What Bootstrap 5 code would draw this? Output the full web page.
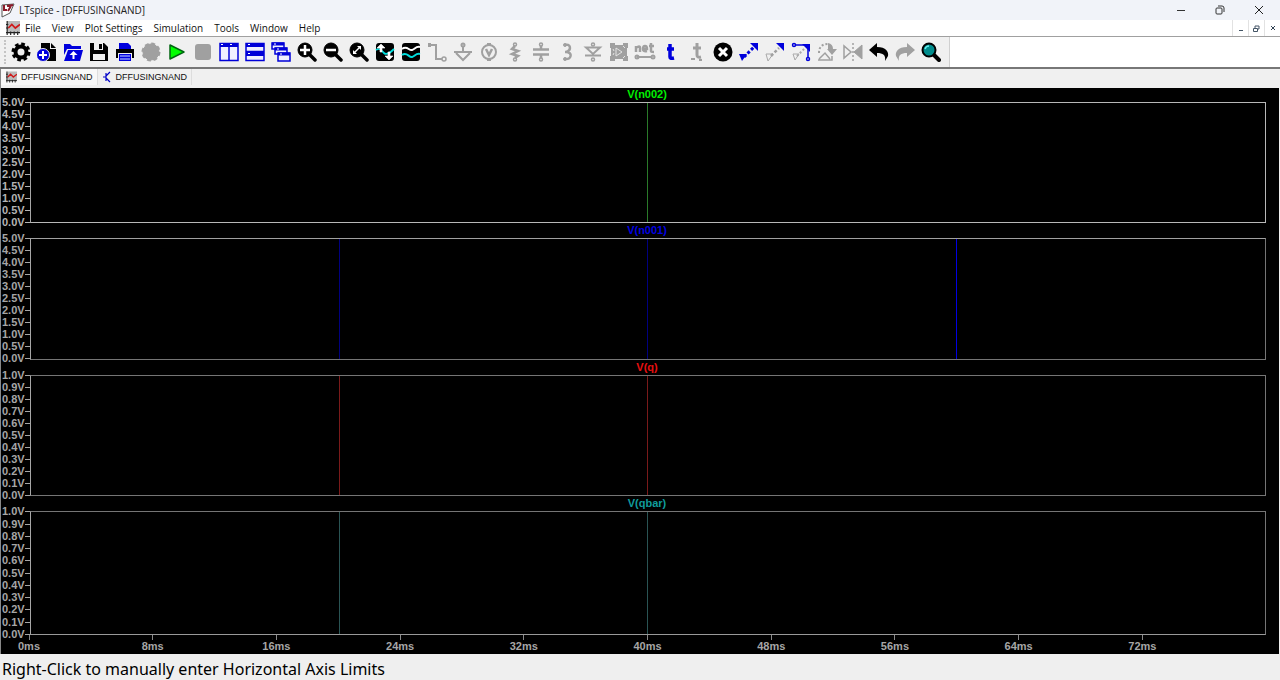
<!DOCTYPE html>
<html lang="en">
<head>
<meta charset="utf-8">
<meta name="viewport" content="width=device-width, initial-scale=1">
<title>LTspice - [DFFUSINGNAND]</title>
<link href="https://cdn.jsdelivr.net/npm/bootstrap@5.3.0/dist/css/bootstrap.min.css" rel="stylesheet">
<style>
  body { font-family: "Open Sans", "Noto Sans", sans-serif; font-size: 10px; line-height: 16px; color: #111; background: #efefef; }
  button { border: 0; background: transparent; padding: 0; color: inherit; }
  svg { display: block; }
  .titlebar { height: 20px; background: #f1f3f9; color: #222; padding-right: 2px; }
  .win-btn { width: 39px; height: 20px; }
  .menubar { height: 17px; background: #fff; border-bottom: 1px solid #a0a0a0; padding-left: 6px; }
  .menu-items { gap: 11px; margin-left: 5px; }
  .menubar a { color: #111; text-decoration: none; }
  .mdi-btn { width: 16px; height: 16px; border-left: 1px solid #e2e2e2; }
  .toolrow { height: 32px; background: #fff; border-bottom: 2px solid #777; }
  .tools { background: #f0f0f0; padding: 0 5px 0 8px; border-right: 1px solid #d0d0d0; }
  .tools::before { content: ""; width: 0; height: 24px; margin: 0 2px 0 -4px; border-left: 2px dotted #c4c4c4; }
  .tools button { width: 26px; height: 30px; }
  .tools svg { margin: auto; }
  .off { color: #a0a0a0; }
  .doctabs { height: 19px; background: #f0f0f0; font: 9px/16px "Liberation Sans", sans-serif; border-left: 1px solid #888; }
  .doctabs button { height: 16px; padding: 0 4px 0 5px; border-right: 1px solid #ddd; }
  .doctabs .current { background: #f8f8f8; }
  .plots { background: #000; color: #a6a6a6; font: bold 11px/14px "Liberation Sans", sans-serif; border-left: 1px solid #888; margin-right: 1px; padding-right: 13px; }
  .pane { flex: 137 1 0; --frame: #757575; }
  .pane.active { flex-grow: 135; --frame: #b8b8b8; color: #b4b4b4; }
  .pane.tall { flex-grow: 139; --base: #999; }
  .pane-title { height: 15px; margin-left: 27px; line-height: 14px; }
  .pane.active .pane-title { height: 14px; line-height: 13px; }
  .scale { width: 29px; padding-left: 1px; }
  .scale div { height: 1px; line-height: 1px; }
  .scale div::after { content: ""; width: 5px; height: 1px; margin-left: auto; background: currentColor; }
  .frame { border: 1px solid var(--frame); border-left-color: #a6a6a6; border-bottom-color: var(--base, var(--frame)); }
  .edge { top: 0; bottom: 0; width: 1px; margin-left: -1px; background: currentColor; }
  .at-20 { left: 25%; } .at-40 { left: 50%; } .at-60 { left: 75%; }
  .timeaxis { height: 19px; margin-left: 28px; }
  .timeaxis > div { margin: 0 -5%; }
  .timeaxis span { flex: 1 1 0; text-align: center; line-height: 13px; }
  .timeaxis span::before { content: ""; display: block; width: 1px; height: 5px; margin: 0 auto; background: #888; }
  .timeaxis span:last-child { visibility: hidden; }
  .statusbar { height: 26px; font-family: "Noto Sans", sans-serif; font-size: 16px; line-height: 30px; padding-left: 2px; color: #000; }
</style>
</head>
<body>
<div class="d-flex flex-column vh-100 overflow-hidden">
  <header class="titlebar d-flex align-items-center flex-shrink-0">
    <svg width="15" height="16" viewBox="0 0 15 16" fill="none"><path d="M2 3 14 2 10 11 2 15Z" fill="#fff" stroke="#555"/><path d="M4 3v5h3M7 4l6-1M11 4 8 9" stroke="#8b1a2b" stroke-width="2"/></svg>
    <span class="ms-1">LTspice - [DFFUSINGNAND]</span>
    <div class="ms-auto d-flex">
      <button class="win-btn" aria-label="Minimize"><svg class="mx-auto" width="10" height="10" stroke="#333"><path d="M1 5.500h8"/></svg></button>
      <button class="win-btn" aria-label="Restore"><svg class="mx-auto" width="10" height="10" fill="none" stroke="#333"><rect x="1" y="3" width="6" height="6" rx="1"/><path d="M3 1h4q2 0 2 2v4"/></svg></button>
      <button class="win-btn" aria-label="Close"><svg class="mx-auto" width="10" height="10" stroke="#222"><path d="M1 1l8 8M9 1 1 9"/></svg></button>
    </div>
  </header>

  <nav class="menubar d-flex align-items-center flex-shrink-0" aria-label="Menu">
    <svg width="14" height="14" viewBox="0 0 12 12" fill="none"><path d="M1 0h11v10H1z" fill="#bbb"/><path d="M1 0v12M0 10h12M0 3h2M0 6h2M4 9v3M7 9v3M10 9v3" stroke="#222"/><path d="M2 6 5 3l3 3 4-3" stroke="#d01818" stroke-width="1.500"/></svg>
    <div class="menu-items d-flex">
      <a href="#">File</a><a href="#">View</a><a href="#">Plot Settings</a><a href="#">Simulation</a><a href="#">Tools</a><a href="#">Window</a><a href="#">Help</a>
    </div>
    <div class="ms-auto d-flex">
      <button class="mdi-btn" aria-label="Minimize document"><svg class="mx-auto" width="6" height="8" stroke="#456"><path d="M1 6.500h4"/></svg></button>
      <button class="mdi-btn" aria-label="Restore document"><svg class="mx-auto" width="7" height="7" fill="none" stroke="#456"><path d="M.5 3.500h4v3h-4zM2 3V1h4v3H5"/></svg></button>
      <button class="mdi-btn" aria-label="Close document"><svg class="mx-auto" width="6" height="6" stroke="#345"><path d="M1 1l4 4M5 1 1 5"/></svg></button>
    </div>
  </nav>

  <div class="toolrow d-flex flex-shrink-0">
    <div class="tools d-flex align-items-center" role="toolbar" aria-label="Tools">
      <button aria-label="Settings"><svg width="20" height="20" fill="none" stroke="#000"><circle cx="10" cy="10" r="5.500" stroke-width="4"/><circle cx="10" cy="10" r="8" stroke-width="3" stroke-dasharray="3.600 2.680"/></svg></button>
      <button aria-label="New"><svg width="20" height="20"><path d="M4 1h9v6h6v12H4z"/><path d="M14 1l5 5h-5z"/><circle cx="6" cy="13" r="6.500" fill="#00d" stroke="#f0f0f0"/><path d="M6 9v8M2 13h8" stroke="#fff" stroke-width="2"/></svg></button>
      <button aria-label="Open"><svg width="20" height="20" fill="#0000dc"><path d="M1 2h6l2 2h9v3H4L1 13z"/><path d="M5 8h15l-3 11H1z"/><path d="M10.500 9l4 4h-3v4h-2v-4h-3z" fill="#fff"/></svg></button>
      <button aria-label="Save"><svg width="20" height="20"><path d="M1 1h14l4 4v14H1z"/><path d="M5 1h9v7H5z" fill="#f0f0f0"/><path d="M10 2h3v5h-3z"/><path d="M4 12h12v6H4z" fill="#f0f0f0"/></svg></button>
      <button aria-label="Print"><svg width="20" height="20"><path d="M4 1h9l3 3v4H4z" fill="#00d"/><path d="M1 7h18v9H1z"/><path d="M3 11h14v9H3z" fill="#f0f0f0"/><path d="M4 12h12v7H4z" fill="#00d"/><path d="M5 14h10M5 17h10" stroke="#cdf"/></svg></button>
      <button aria-label="Halt" class="off"><svg width="20" height="20" fill="currentColor" stroke="currentColor"><circle cx="10" cy="10" r="8"/><circle cx="10" cy="10" r="8.500" fill="none" stroke-width="2" stroke-dasharray="4 2.675"/></svg></button>
      <button aria-label="Run"><svg width="20" height="20" fill="#0f0" stroke="#061" stroke-width="1.500" stroke-linejoin="round"><path d="M3 3v14l14-7z"/></svg></button>
      <button aria-label="Stop" class="off"><svg width="20" height="20"><rect x="2" y="2" width="16" height="16" rx="3" fill="currentColor"/></svg></button>
      <button aria-label="Tile vertically"><svg width="20" height="20" fill="#f0f0ff" stroke="#0000d8"><path d="M1 1.500h9v17H1zM10 1.500h9v17h-9z" stroke-width="1.500"/><path d="M1 3h18" stroke-width="4"/><path d="M2 2.500h2M11 2.500h2" stroke="#fff"/></svg></button>
      <button aria-label="Tile horizontally"><svg width="20" height="20" fill="#f0f0ff" stroke="#0000d8"><path d="M1 1.500h18v8H1zM1 10.500h18v8H1z" stroke-width="1.500"/><path d="M1 3h18M1 12h18" stroke-width="4"/><path d="M3 2.500h2M3 11.500h2" stroke="#fff"/></svg></button>
      <button aria-label="Cascade"><svg width="20" height="20" fill="#f0f0ff" stroke="#0000d8" stroke-width="1.500"><path d="M1 1h12v6H1zM4 6h12v6H4zM7 11h12v8H7z"/><path d="M1 2h12M4 7h12M7 12h12" stroke-width="3"/><path d="M3 2h2M6 7h2M9 12h2" stroke="#fff" stroke-width="1"/></svg></button>
      <button aria-label="Zoom in"><svg width="20" height="20" stroke="#000" fill="none"><circle cx="8" cy="8" r="7" fill="#000"/><path d="M12 12l6 6" stroke-width="3.500" stroke-linecap="round"/><path d="M8 3v10M3 8h10" stroke="#fff" stroke-width="2.500"/></svg></button>
      <button aria-label="Zoom out"><svg width="20" height="20" stroke="#000" fill="none"><circle cx="8" cy="8" r="7" fill="#000"/><path d="M12 12l6 6" stroke-width="3.500" stroke-linecap="round"/><path d="M3 8h10" stroke="#fff" stroke-width="2.500"/></svg></button>
      <button aria-label="Zoom to fit"><svg width="20" height="20" stroke="#000" fill="none"><circle cx="8" cy="8" r="7" fill="#000"/><path d="M12 12l6 6" stroke-width="3.500" stroke-linecap="round"/><path d="M5 11l6-6" stroke="#fff" stroke-width="1.500"/><path d="M8 4h4v4zM4 8v4h4z" fill="#fff" stroke="none"/></svg></button>
      <button aria-label="Autorange"><svg width="20" height="20" fill="none"><rect x="1" y="1" width="18" height="18" rx="3" fill="#000"/><path d="M1 8c4-3 6 1 8 3s6 0 10-4" stroke="#0dd" stroke-width="1.800"/><path d="M6 2l4 4H7v4H5V6H2zM14 18l4-4h-3v-4h-2v4h-3z" fill="#fff" stroke="#fff" stroke-width=".6"/></svg></button>
      <button aria-label="Add trace"><svg width="20" height="20" fill="none"><rect x="1" y="1" width="18" height="18" rx="3" fill="#000"/><path d="M1 7c5-4 7 2 10 1s4-4 8-3" stroke="#fff" stroke-width="2"/><path d="M1 13c5-4 7 3 10 2s4-4 8-3" stroke="#0dd" stroke-width="2"/></svg></button>
      <button aria-label="Wire" class="off"><svg width="20" height="20" fill="none" stroke="currentColor" stroke-width="2"><path d="M2 3h7v14h6"/><path d="M1 1h3v4H1z" fill="currentColor" stroke="none"/><circle cx="17" cy="17" r="2" stroke-width="1.500"/></svg></button>
      <button aria-label="Ground" class="off"><svg width="20" height="20" fill="none" stroke="currentColor" stroke-width="2"><circle cx="10" cy="3" r="1.500"/><path d="M10 5v5M1 10h18M3 11l7 7 7-7"/></svg></button>
      <button aria-label="Voltage source" class="off"><svg width="20" height="20" fill="none" stroke="currentColor" stroke-width="2"><circle cx="10" cy="10" r="7"/><path d="M7 7l3 6 3-6" stroke-width="2.500"/><path d="M8 1h4v3H8zM8 16h4v3H8z" fill="currentColor" stroke="none"/></svg></button>
      <button aria-label="Resistor" class="off"><svg width="20" height="20" fill="none" stroke="currentColor" stroke-width="2.500"><circle cx="10" cy="2.500" r="1.500" stroke-width="1.500"/><path d="M10 4 7 7l6 2-6 3 6 2-3 2"/><circle cx="10" cy="17.500" r="1.500" stroke-width="1.500"/></svg></button>
      <button aria-label="Capacitor" class="off"><svg width="20" height="20" fill="none" stroke="currentColor" stroke-width="2"><circle cx="10" cy="2.500" r="1.500" stroke-width="1.500"/><circle cx="10" cy="17.500" r="1.500" stroke-width="1.500"/><path d="M10 4v3M10 13v3M2 7.500h16M2 12.500h16" stroke-width="2.500"/></svg></button>
      <button aria-label="Inductor" class="off"><svg width="20" height="20" fill="none" stroke="currentColor" stroke-width="2.500"><path d="M7 3c7-2 8 5 2 7 7 0 6 8-2 7M8 10h3"/><circle cx="8" cy="3" r="1.500" stroke-width="1"/><circle cx="8" cy="17" r="1.500" stroke-width="1"/></svg></button>
      <button aria-label="Diode" class="off"><svg width="20" height="20" fill="none" stroke="currentColor" stroke-width="2"><circle cx="10" cy="2.500" r="1.500" stroke-width="1.500"/><circle cx="10" cy="17.500" r="1.500" stroke-width="1.500"/><path d="M3 5.500h14L10 12zM2 13.500h16"/></svg></button>
      <button aria-label="Component" class="off"><svg width="20" height="20" fill="currentColor"><path d="M1 1h5v2h8V1h5v5h-1v8h1v5h-5v-2H6v2H1v-5h1V6H1z"/><path d="M7 6v8l6-4zM14 4l2 2M14 16l2-2M4 7l1 2M4 13l1-2" fill="none" stroke="#e4e4e4"/></svg></button>
      <button aria-label="Net name" class="off"><svg width="22" height="20" fill="none" stroke="currentColor" stroke-width="2.500"><path d="M2 10V4M2 6q4-3 4 0v4M9 7h4q0-3-2-3t-2 3q0 3 4 2M17 1v8q0 1 3 1M15 4h5"/><path d="M3 15h15" stroke-width="2"/><circle cx="3" cy="15" r="1.500" stroke-width="2"/><circle cx="19" cy="15" r="1.500" stroke-width="2"/></svg></button>
      <button aria-label="Text"><svg width="20" height="20" fill="none" stroke="#0000dc" stroke-width="3.500"><path d="M9 2v13q0 2 4 1M6 7h7"/></svg></button>
      <button aria-label="SPICE directive" class="off"><svg width="20" height="20" fill="none" stroke="currentColor" stroke-width="3"><path d="M10 1v12q0 3 4 2M6 6h8"/><path d="M4 17h4M12 18h3" stroke-width="2"/></svg></button>
      <button aria-label="Delete"><svg width="20" height="20"><circle cx="10" cy="10" r="9.500"/><path d="M6 6l8 8M14 6l-8 8" stroke="#fff" stroke-width="3"/></svg></button>
      <button aria-label="Duplicate"><svg width="20" height="20" fill="#0000dc"><path d="M11 1h8v8z"/><path d="M0 12h8l-5 7z"/><path d="M5 15 15 5" stroke="#0000dc" stroke-width="3" stroke-dasharray="3 2"/></svg></button>
      <button aria-label="Move"><svg width="20" height="20"><path d="M11 1h8v8z" fill="#0000dc"/><path d="M1 12h7l-5 7z" fill="none" stroke="#aaa"/><path d="M6 14 14 6" stroke="#a0a0a0" stroke-width="2.500" stroke-dasharray="3 2"/></svg></button>
      <button aria-label="Stretch"><svg width="20" height="20" fill="none" stroke="#0000dc" stroke-width="1.500"><circle cx="3" cy="3" r="1.500"/><path d="M5 3h12v12"/><circle cx="17" cy="17" r="1.500"/><path d="M11 2h8v8z" fill="#0000dc" stroke="none"/><path d="M2 12h6l-4 6z" stroke="#aaa" stroke-width="1"/><path d="M6 14l8-8" stroke="#aaa" stroke-width="2" stroke-dasharray="2 2"/></svg></button>
      <button aria-label="Rotate" class="off"><svg width="20" height="20" fill="none" stroke="currentColor" stroke-width="2"><path d="M2 11q0-9 9-9" stroke-dasharray="2 2"/><path d="M11 1q5 1 5 6h4l-5 6-5-6h1z" fill="currentColor" stroke="none"/><path d="M1 18h14v-4M2 17l6-6 5 6" stroke-width="1.500"/></svg></button>
      <button aria-label="Mirror" class="off"><svg width="20" height="20" fill="none" stroke="currentColor"><path d="M1 4v12l7-6z" stroke-width="1.500"/><path d="M19 3v14l-8-7z" fill="currentColor"/><path d="M10 1v18" stroke-width="1.500" stroke-dasharray="2 2"/></svg></button>
      <button aria-label="Undo"><svg width="20" height="20"><path d="M0 8 8 1v4c9 0 12 5 11 9l-3 5c1-6-2-8-8-8v4z"/></svg></button>
      <button aria-label="Redo" class="off"><svg width="20" height="20" fill="currentColor"><path d="M20 8 12 1v4C3 5 0 10 1 14l3 5c-1-6 2-8 8-8v4z"/></svg></button>
      <button aria-label="Find"><svg width="20" height="20"><path d="M12 12l6 6" stroke="#000" stroke-width="4" stroke-linecap="round"/><circle cx="8" cy="8" r="6.500" fill="#008c8c" stroke="#000" stroke-width="2"/><path d="M4 7q1-3 4-3" fill="none" stroke="#6ee" stroke-width="1.500"/></svg></button>
    </div>
  </div>

  <div class="doctabs d-flex flex-shrink-0" role="tablist">
    <button class="current d-flex align-items-center gap-1" role="tab" aria-selected="true"><svg width="11" height="12" viewBox="0 0 12 12" fill="none"><path d="M1 0h11v10H1z" fill="#bbb"/><path d="M1 0v12M0 10h12M0 3h2M0 6h2M4 9v3M7 9v3M10 9v3" stroke="#222"/><path d="M2 6 5 3l3 3 4-3" stroke="#d01818" stroke-width="1.500"/></svg>DFFUSINGNAND</button>
    <button class="d-flex align-items-center gap-1" role="tab" aria-selected="false"><svg width="9" height="12" fill="none" stroke="#0000c8" stroke-width="1.200"><path d="M0 6h3M3 2v8M3 5l4-4M3 7l4 4"/></svg>DFFUSINGNAND</button>
  </div>

  <main class="plots d-flex flex-column flex-grow-1 overflow-hidden">
    <section class="pane active d-flex flex-column">
      <div class="pane-title text-center" style="color:#00f000">V(n002)</div>
      <div class="d-flex flex-grow-1">
        <div class="scale d-flex flex-column justify-content-between"><div class="d-flex">5.0V</div><div class="d-flex">4.5V</div><div class="d-flex">4.0V</div><div class="d-flex">3.5V</div><div class="d-flex">3.0V</div><div class="d-flex">2.5V</div><div class="d-flex">2.0V</div><div class="d-flex">1.5V</div><div class="d-flex">1.0V</div><div class="d-flex">0.5V</div><div class="d-flex">0.0V</div></div>
        <div class="frame flex-grow-1 position-relative" style="color:#2a7a2a"><i class="edge at-40 position-absolute"></i></div>
      </div>
    </section>
    <section class="pane d-flex flex-column">
      <div class="pane-title text-center" style="color:#0000e0">V(n001)</div>
      <div class="d-flex flex-grow-1">
        <div class="scale d-flex flex-column justify-content-between"><div class="d-flex">5.0V</div><div class="d-flex">4.5V</div><div class="d-flex">4.0V</div><div class="d-flex">3.5V</div><div class="d-flex">3.0V</div><div class="d-flex">2.5V</div><div class="d-flex">2.0V</div><div class="d-flex">1.5V</div><div class="d-flex">1.0V</div><div class="d-flex">0.5V</div><div class="d-flex">0.0V</div></div>
        <div class="frame flex-grow-1 position-relative" style="color:#000080;border-top-color:#a0a0a0"><i class="edge at-20 position-absolute"></i><i class="edge at-40 position-absolute"></i><i class="edge at-60 position-absolute" style="color:#0000e0"></i></div>
      </div>
    </section>
    <section class="pane d-flex flex-column">
      <div class="pane-title text-center" style="color:#e81010">V(q)</div>
      <div class="d-flex flex-grow-1">
        <div class="scale d-flex flex-column justify-content-between"><div class="d-flex">1.0V</div><div class="d-flex">0.9V</div><div class="d-flex">0.8V</div><div class="d-flex">0.7V</div><div class="d-flex">0.6V</div><div class="d-flex">0.5V</div><div class="d-flex">0.4V</div><div class="d-flex">0.3V</div><div class="d-flex">0.2V</div><div class="d-flex">0.1V</div><div class="d-flex">0.0V</div></div>
        <div class="frame flex-grow-1 position-relative" style="color:#7a1a1a"><i class="edge at-20 position-absolute"></i><i class="edge at-40 position-absolute"></i></div>
      </div>
    </section>
    <section class="pane tall d-flex flex-column">
      <div class="pane-title text-center" style="color:#109c9c">V(qbar)</div>
      <div class="d-flex flex-grow-1">
        <div class="scale d-flex flex-column justify-content-between"><div class="d-flex">1.0V</div><div class="d-flex">0.9V</div><div class="d-flex">0.8V</div><div class="d-flex">0.7V</div><div class="d-flex">0.6V</div><div class="d-flex">0.5V</div><div class="d-flex">0.4V</div><div class="d-flex">0.3V</div><div class="d-flex">0.2V</div><div class="d-flex">0.1V</div><div class="d-flex">0.0V</div></div>
        <div class="frame flex-grow-1 position-relative" style="color:#2a5454"><i class="edge at-20 position-absolute"></i><i class="edge at-40 position-absolute"></i></div>
      </div>
    </section>
    <div class="timeaxis flex-shrink-0"><div class="d-flex"><span>0ms</span><span>8ms</span><span>16ms</span><span>24ms</span><span>32ms</span><span>40ms</span><span>48ms</span><span>56ms</span><span>64ms</span><span>72ms</span><span></span></div></div>
  </main>
  <footer class="statusbar flex-shrink-0">Right-Click to manually enter Horizontal Axis Limits</footer>
</div>
<script src="https://cdn.jsdelivr.net/npm/bootstrap@5.3.0/dist/js/bootstrap.bundle.min.js"></script>
</body>
</html>
